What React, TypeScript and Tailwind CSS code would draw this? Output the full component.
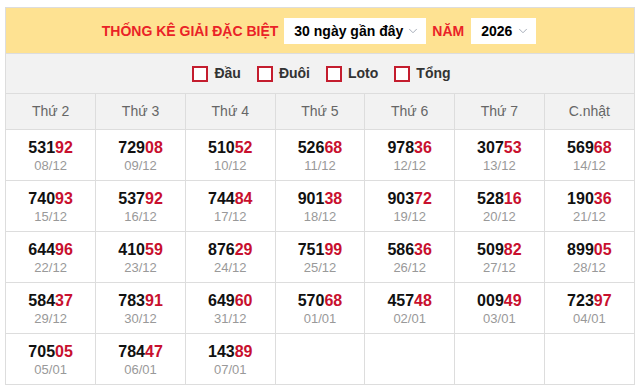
import { ChevronDown } from "lucide-react";

type Cell = { num: string; date: string } | null;

const rows: Cell[][] = [
  [
    { num: "53192", date: "08/12" },
    { num: "72908", date: "09/12" },
    { num: "51052", date: "10/12" },
    { num: "52668", date: "11/12" },
    { num: "97836", date: "12/12" },
    { num: "30753", date: "13/12" },
    { num: "56968", date: "14/12" },
  ],
  [
    { num: "74093", date: "15/12" },
    { num: "53792", date: "16/12" },
    { num: "74484", date: "17/12" },
    { num: "90138", date: "18/12" },
    { num: "90372", date: "19/12" },
    { num: "52816", date: "20/12" },
    { num: "19036", date: "21/12" },
  ],
  [
    { num: "64496", date: "22/12" },
    { num: "41059", date: "23/12" },
    { num: "87629", date: "24/12" },
    { num: "75199", date: "25/12" },
    { num: "58636", date: "26/12" },
    { num: "50982", date: "27/12" },
    { num: "89905", date: "28/12" },
  ],
  [
    { num: "58437", date: "29/12" },
    { num: "78391", date: "30/12" },
    { num: "64960", date: "31/12" },
    { num: "57068", date: "01/01" },
    { num: "45748", date: "02/01" },
    { num: "00949", date: "03/01" },
    { num: "72397", date: "04/01" },
  ],
  [
    { num: "70505", date: "05/01" },
    { num: "78447", date: "06/01" },
    { num: "14389", date: "07/01" },
    null,
    null,
    null,
    null,
  ],
];

const days = ["Thứ 2", "Thứ 3", "Thứ 4", "Thứ 5", "Thứ 6", "Thứ 7", "C.nhật"];
const filters = ["Đầu", "Đuôi", "Loto", "Tổng"];

const Select = ({ label, width }: { label: string; width: string }) => (
  <div
    className={`flex items-center justify-between h-[26px] bg-white pl-[10px] pr-[6px] ${width}`}
  >
    <span className="text-[14px] font-bold text-black">{label}</span>
    <ChevronDown className="w-[14px] h-[14px] text-gray-400" strokeWidth={1.5} />
  </div>
);

export default function App() {
  return (
    <div className="pt-[7px] px-[5px] bg-white font-['Liberation_Sans',Arial,sans-serif]">
      <div className="w-[630px] border border-[#ddd] border-b-0">
        {/* Title bar */}
        <div className="flex items-center justify-center gap-[6px] h-[45px] bg-[#fee292] pt-[1px] pr-[2px]">
          <span className="text-[14px] font-bold text-[#ea2227]">
            THỐNG KÊ GIẢI ĐẶC BIỆT
          </span>
          <Select label="30 ngày gần đây" width="w-[142px]" />
          <span className="text-[14px] font-bold text-[#ea2227] mr-[1px]">NĂM</span>
          <Select label="2026" width="w-[65px]" />
        </div>

        {/* Filters */}
        <div className="flex items-center justify-center gap-[16px] h-[40px] bg-[#f2f2f2] border-t border-[#ddd] pl-[3px]">
          {filters.map((f) => (
            <label key={f} className="flex items-center gap-[6px]">
              <span className="w-[16px] h-[16px] border-2 border-[#c41d2e] bg-white" />
              <span className="text-[14px] font-bold text-[#333]">{f}</span>
            </label>
          ))}
        </div>

        {/* Calendar */}
        <table className="w-full table-fixed border-collapse">
          <thead>
            <tr className="h-[36px] bg-[#f2f2f2]">
              {days.map((d) => (
                <th
                  key={d}
                  className="border border-[#ddd] first:border-l-0 last:border-r-0 text-[14px] font-normal text-[#666]"
                >
                  {d}
                </th>
              ))}
            </tr>
          </thead>
          <tbody>
            {rows.map((row, i) => (
              <tr key={i} className="h-[51px]">
                {row.map((c, j) => (
                  <td
                    key={j}
                    className="border border-[#ddd] first:border-l-0 last:border-r-0 text-center align-middle"
                  >
                    {c && (
                      <div className="flex flex-col items-center leading-none pt-[1px]">
                        <span className="text-[16px] font-bold text-[#111]">
                          {c.num.slice(0, 3)}
                          <span className="text-[#c8102e]">{c.num.slice(3)}</span>
                        </span>
                        <span className="text-[13px] text-[#999] mt-[3px]">{c.date}</span>
                      </div>
                    )}
                  </td>
                ))}
              </tr>
            ))}
          </tbody>
        </table>
      </div>
    </div>
  );
}
